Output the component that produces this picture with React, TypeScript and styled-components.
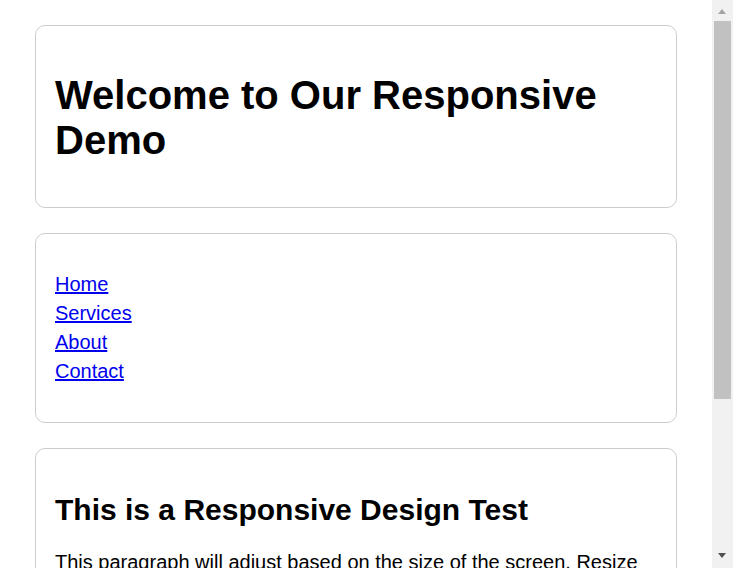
import React from "react";
import styled, { createGlobalStyle } from "styled-components";

const GlobalStyle = createGlobalStyle`
  html, body {
    margin: 0;
    padding: 0;
    background: #ffffff;
  }
  body {
    font-family: "Liberation Sans", Arial, sans-serif;
    color: #000000;
  }
`;

const Page = styled.div`
  display: flex;
  flex-direction: column;
  gap: 25px;
  padding: 25px 35px;
  margin-right: 21px;
`;

const Card = styled.section`
  border: 1px solid #cccccc;
  border-radius: 10px;
  padding: 19px 19px 18px;
  background: #ffffff;
`;

const Title = styled.h1`
  font-size: 40px;
  font-weight: bold;
  margin: 28px 0 26px;
`;

const NavList = styled.ul`
  list-style: none;
  margin: 20px 0 21px;
  padding: 0;
  display: flex;
  flex-direction: column;
  gap: 6px;
  font-size: 20px;
`;

const NavLink = styled.a`
  color: #0000ee;
  text-decoration: underline;
`;

const Subtitle = styled.h2`
  font-size: 30px;
  font-weight: bold;
  margin: 24.5px 0;
`;

const Text = styled.p`
  font-size: 20px;
  margin: 20px 0;
`;

const FooterText = styled.p`
  font-size: 20px;
  margin: 20px 0;
  text-align: center;
`;

const ScrollTrack = styled.div`
  position: fixed;
  top: 0;
  right: 0;
  width: 21px;
  height: 100vh;
  background: #f1f1f1;
`;

const ScrollArrow = styled.div<{ $down?: boolean }>`
  position: absolute;
  left: 6px;
  ${(p) => (p.$down ? "bottom: 10px;" : "top: 9px;")}
  width: 0;
  height: 0;
  border-left: 4.5px solid transparent;
  border-right: 4.5px solid transparent;
  ${(p) =>
    p.$down
      ? "border-top: 5px solid #505050;"
      : "border-bottom: 5px solid #a3a3a3;"}
`;

const ScrollThumb = styled.div`
  position: absolute;
  top: 21px;
  left: 2px;
  width: 17px;
  height: 378px;
  background: #c1c1c1;
`;

const links = ["Home", "Services", "About", "Contact"];

export default function App() {
  return (
    <>
      <GlobalStyle />
      <Page>
        <Card as="header">
          <Title>Welcome to Our Responsive Demo</Title>
        </Card>
        <Card as="nav">
          <NavList>
            {links.map((l) => (
              <li key={l}>
                <NavLink href="#">{l}</NavLink>
              </li>
            ))}
          </NavList>
        </Card>
        <Card as="main">
          <Subtitle>This is a Responsive Design Test</Subtitle>
          <Text>
            This paragraph will adjust based on the size of the screen. Resize
            the browser window to see how the layout changes across different
            devices, from large desktop monitors down to small phones.
          </Text>
        </Card>
        <Card as="footer">
          <FooterText>&copy; 2024 Responsive Demo. All rights reserved.</FooterText>
        </Card>
      </Page>
      <ScrollTrack aria-hidden="true">
        <ScrollArrow />
        <ScrollThumb />
        <ScrollArrow $down />
      </ScrollTrack>
    </>
  );
}
